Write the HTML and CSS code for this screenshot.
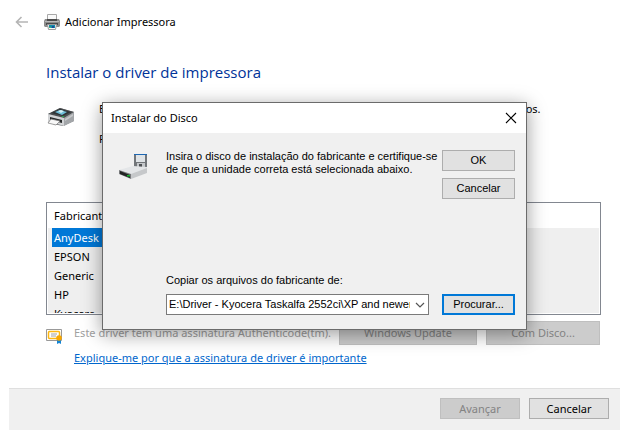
FILE: index.html
```html
<!DOCTYPE html>
<html lang="pt-BR">
<head>
<meta charset="utf-8">
<title>Adicionar Impressora</title>
<link rel="stylesheet" href="styles.css">
</head>
<body>
<main class="wizard">
  <header class="wizard-header">
    <button class="icon-button back" aria-label="Voltar" disabled>
      <svg width="14" height="12" viewBox="0 0 14 12" fill="none" stroke="#b5b5b5" stroke-width="1.6"><path d="M13 6H1.5M6.5 1L1.5 6l5 5"/></svg>
    </button>
    <svg class="app-icon" width="16" height="16" viewBox="0 0 16 16">
      <path d="M3.500 6V.5h9V6" fill="#fafafa" stroke="#a8a8a8"/>
      <path d="M1 5h2v1h10V5h2l1 2v5l-1 1H1l-1-1V7z" fill="#8c8c8c"/>
      <path d="M3 5h10v2H3zM2 9h12v2H2z" fill="#4c4c4c"/>
      <path d="M1 7h14v1H1z" fill="#b8b8b8"/>
      <path d="M3.500 10.500h9l-1 5h-7z" fill="#f8f8f8" stroke="#9c9c9c"/>
      <path d="M5 11h6v3H5z" fill="#168ba8"/>
      <path d="M8 12h2v2H8z" fill="#174c9b"/>
      <path d="M5 13h2v1H5z" fill="#46b96a"/>
    </svg>
    <span>Adicionar Impressora</span>
  </header>

  <section class="wizard-body">
    <h1>Instalar o driver de impressora</h1>
    <div class="intro">
      <svg width="30" height="20" viewBox="0 0 30 20">
        <path d="M2 7L14 1l14 4v9l-11 5-10-2-5-3z" fill="#77797b"/>
        <path d="M2 7L14 1l14 4-10 6z" fill="#4d5052"/>
        <path d="M5 6l9-4 11 3-8 4z" fill="#2f3437"/>
        <path d="M9 5l5-2 7 2-5 3z" fill="#70bfd9"/>
        <path d="M12 4l3 2 3-2-3-1z" fill="#d5f1f5"/>
        <path d="M2 7l16 4v8L2 14z" fill="#d2d4d6"/>
        <path d="M18 11l10-6v9l-10 5z" fill="#a3a6a9"/>
        <path d="M19 12l8-5v2l-8 5z" fill="#c6c8ca"/>
        <path d="M4 10l12 3v3L4 13z" fill="#252829"/>
        <path d="M5 12l9 2-4 4-8-2z" fill="#f8f8f8" stroke="#777" stroke-width=".7"/>
        <path d="M16 9h2v1h-2z" fill="#28a84a"/>
      </svg>
      <div class="intro-text">
        <p>Escolha a sua impressora na lista. Clique em Windows Update para ver mais modelos.</p>
        <p>Para instalar o driver de um CD de instalação, clique em Com Disco.</p>
      </div>
    </div>

    <div class="list">
      <table>
        <thead><tr><th scope="col">Fabricante</th></tr></thead>
        <tbody>
          <tr class="selected"><td>AnyDesk</td></tr>
          <tr><td>EPSON</td></tr>
          <tr><td>Generic</td></tr>
          <tr><td>HP</td></tr>
          <tr><td>Kyocera</td></tr>
        </tbody>
      </table>
    </div>

    <div class="signature">
      <svg width="16" height="16" viewBox="0 0 16 16">
        <path d="M.5 1.500h15v11H.5z" fill="#fff" stroke="#999"/>
        <rect x="2.500" y="3.500" width="11" height="7" rx="1" fill="#fff" stroke="#fdb813" stroke-width="1.500"/>
        <path d="M5 6h6M5 8h5" stroke="#a0a0a0"/>
        <path d="M11 11h4v5l-2-1-2 1z" fill="#1484d6"/>
        <circle cx="13" cy="10" r="2.800" fill="#f7a600"/>
      </svg>
      <span class="signature-text">Este driver tem uma assinatura Authenticode(tm).</span>
      <button class="button update" disabled>Windows Update</button>
      <button class="button disc" disabled>Com Disco...</button>
    </div>
    <a class="help" href="#">Explique-me por que a assinatura de driver é importante</a>
  </section>

  <footer class="wizard-footer">
    <button class="button" disabled>Avançar</button>
    <button class="button">Cancelar</button>
  </footer>
</main>

<div class="dialog" role="dialog" aria-labelledby="dialog-title">
  <header class="dialog-header">
    <h2 id="dialog-title">Instalar do Disco</h2>
    <button class="icon-button" aria-label="Fechar">
      <svg width="12" height="12" viewBox="0 0 12 12" stroke="#000" stroke-width="1.100"><path d="M1 1l10 10M11 1L1 11"/></svg>
    </button>
  </header>
  <div class="dialog-body">
    <svg class="drive" width="28" height="28" viewBox="0 0 28 28">
      <path d="M15 1h13v15H15z" fill="#72767a"/>
      <path d="M17 2h9v7h-9z" fill="#dfe3e6"/>
      <path d="M15 1h13v1H15z" fill="#1d67b3"/>
      <path d="M18 10h8v6h-8z" fill="#c4c7ca"/>
      <path d="M20 11h3v4h-3z" fill="#4e5154"/>
      <path d="M0 17l14-4 14 1v2l-16 6z" fill="#e4e6e8"/>
      <path d="M12 21l16-6v5l-16 6z" fill="#c6c8ca"/>
      <path d="M0 17l12 4v5L0 21z" fill="#77797b"/>
      <path d="M1 18l10 4v3L1 21z" fill="#222323"/>
      <path d="M8 22h3v1.500H8z" fill="#16b52f"/>
    </svg>
    <p class="message">Insira o disco de instalação do fabricante e certifique-se de que a unidade correta está selecionada abaixo.</p>
    <div class="actions">
      <button class="button">OK</button>
      <button class="button">Cancelar</button>
    </div>
  </div>
  <div class="source">
    <label for="path">Copiar os arquivos do fabricante de:</label>
    <div class="source-row">
      <div class="combo">
        <select id="path"><option>E:\Driver - Kyocera Taskalfa 2552ci\XP and newer</option></select>
        <svg width="10" height="6" viewBox="0 0 10 6" fill="none" stroke="#555" stroke-width="1.200"><path d="M1 1l4 4 4-4"/></svg>
      </div>
      <button class="button default">Procurar...</button>
    </div>
  </div>
</div>
</body>
</html>
```
FILE: styles.css
```css
* {
  box-sizing: border-box;
}

body {
  margin: 0;
  background: #fff;
  color: #000;
  font: 11px/16px "Noto Sans", "Open Sans", sans-serif;
}

h1, h2, p {
  margin: 0;
  font-weight: 400;
}

svg {
  display: block;
  flex: none;
}

button, select {
  font: inherit;
  color: inherit;
}

.wizard {
  display: flex;
  flex-direction: column;
  min-height: 100vh;
}

.wizard-header {
  display: flex;
  align-items: center;
  height: 44px;
  padding-left: 15px;
}

.app-icon {
  margin: 0 5px 0 15px;
}

.icon-button {
  padding: 0;
  border: 0;
  background: none;
}

.wizard-body {
  padding: 16px 29px 0 46px;
}

h1 {
  font: 15px/24px "Open Sans", "Noto Sans", sans-serif;
  color: #003399;
}

.intro {
  display: flex;
  gap: 23px;
  padding-top: 17px;
  height: 118px;
}

.intro > svg {
  margin-top: 6px;
}

.intro-text {
  display: flex;
  flex-direction: column;
  gap: 14px;
  white-space: nowrap;
}

.list {
  display: grid;
  grid-template-rows: minmax(0, 1fr);
  height: 113px;
  padding: 0 1px 1px;
  border: 1px solid #828790;
}

.list table {
  display: block;
  overflow: hidden;
  background: #efefef;
}

.list thead {
  background: #fff;
}

.list thead, .list tbody, .list tr {
  display: block;
}

.list th, .list td {
  display: flex;
  align-items: center;
  height: 19px;
  padding: 0 6px;
  font-weight: 400;
}

.list th {
  height: 25px;
}

.list .selected td {
  width: 180px;
  margin-left: 4px;
  padding-left: 2px;
  background: #0078d7;
  color: #fff;
}

.button {
  height: 21px;
  padding: 0;
  border: 1px solid #adadad;
  background: #e1e1e1;
}

.button:disabled {
  border-color: #bfbfbf;
  background: #ccc;
  color: #838383;
}

.signature {
  display: flex;
  align-items: center;
  padding: 6px 1px 0 0;
}

.signature > svg {
  margin-top: 6px;
}

.signature-text {
  flex: 1;
  padding-left: 12px;
  color: #a0a0a0;
  white-space: nowrap;
}

.signature .button {
  height: 24px;
}

.update {
  width: 138px;
}

.disc {
  width: 114px;
  margin-left: 9px;
}

.help {
  display: inline-block;
  margin: 5px 0 0 28px;
  color: #0066cc;
}

.wizard-footer {
  display: flex;
  flex: 1;
  align-items: flex-start;
  justify-content: flex-end;
  gap: 9px;
  margin: 22px 10px 0 9px;
  padding: 9px 11px;
  border-top: 1px solid #dfdfdf;
  background: #f0f0f0;
}

.wizard-footer .button {
  width: 80px;
}

.dialog {
  position: absolute;
  top: 102px;
  left: 102px;
  right: 103px;
  border: 1px solid #6b6b6b;
  background: #f0f0f0;
  box-shadow: 0 4px 18px rgba(0, 0, 0, 0.4);
  font: 11px/13px "Liberation Sans", sans-serif;
}

.dialog-header {
  display: flex;
  align-items: center;
  justify-content: space-between;
  height: 30px;
  padding: 0 9px 0 8px;
  background: #fff;
}

.dialog-header h2 {
  font: 11px/16px "Noto Sans", "Open Sans", sans-serif;
}

.dialog-body {
  display: flex;
  padding: 17px 11px 0 16px;
}

.drive {
  margin-top: 3px;
}

.message {
  flex: 1;
  padding: 0 4px 0 19px;
}

.actions {
  display: flex;
  flex-direction: column;
  gap: 7px;
}

.dialog .button {
  width: 73px;
}

.source {
  padding: 75px 11px 14px 63px;
}

.source label {
  display: block;
}

.source-row {
  display: flex;
  gap: 13px;
  padding-top: 7px;
}

.combo {
  display: grid;
  flex: 1;
  min-width: 0;
  align-items: center;
}

.combo select {
  grid-area: 1 / 1;
  width: 100%;
  height: 21px;
  padding: 0 18px 0 2px;
  border: 1px solid #7a7a7a;
  border-radius: 0;
  background: #fff;
  appearance: none;
}

.combo svg {
  grid-area: 1 / 1;
  justify-self: end;
  margin-right: 4px;
  pointer-events: none;
}

.button.default {
  border: 2px solid #0078d7;
}
```
